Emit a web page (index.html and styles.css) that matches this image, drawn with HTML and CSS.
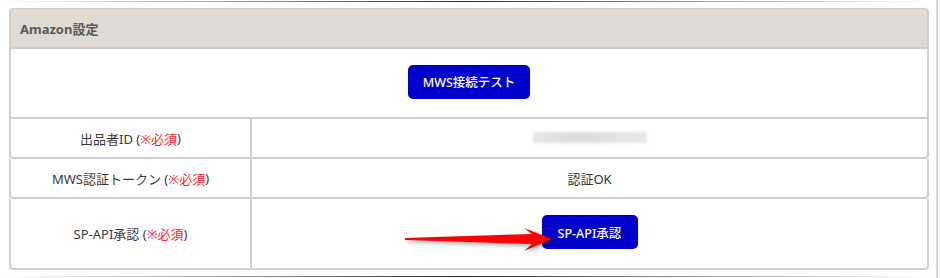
FILE: index.html
```html
<!DOCTYPE html>
<html lang="ja">
<head>
<meta charset="utf-8">
<link rel="stylesheet" href="styles.css">
</head>
<body>
<div class="screen">
  <div class="edge-line"></div>
  <div class="panel">
    <div class="panel-head">Amazon設定</div>
    <div class="row row-full">
      <button class="btn btn-wide">MWS接続テスト</button>
    </div>
    <div class="row row-split rounded">
      <div class="cell label">出品者ID (<span class="req">※必須</span>)</div>
      <div class="cell value"><span class="blur"></span></div>
    </div>
    <div class="row row-split rounded">
      <div class="cell label">MWS認証トークン (<span class="req">※必須</span>)</div>
      <div class="cell value">認証OK</div>
    </div>
    <div class="row row-split rounded tall">
      <div class="cell label">SP-API承認 (<span class="req">※必須</span>)</div>
      <div class="cell value">
        <button class="btn btn-sp">SP-API承認</button>
      </div>
    </div>
    <svg class="arrow" width="160" height="34" viewBox="0 0 160 34">
      <polygon points="2,14 129,10 121,4 149,15 121,27 129,20 2,16" fill="#ff0000"/>
    </svg>
  </div>
  <div class="edge-line bottom"></div>
</div>
</body>
</html>
```

FILE: styles.css
```css
html, body {
  margin: 0;
  padding: 0;
  background: #ffffff;
}

body {
  font-family: "Noto Sans", "Noto Sans CJK JP", sans-serif;
  font-size: 13px;
  color: #333333;
}

.screen {
  width: 938px;
  height: 278px;
  box-sizing: border-box;
  border-right: 2px solid #d9d9d9;
  padding-top: 1px;
  overflow: hidden;
}

.edge-line {
  height: 1px;
  width: 930px;
  background: linear-gradient(to right, rgba(60,60,60,0) 0%, rgba(60,60,60,0.5) 25%, #2a2a2a 50%, rgba(60,60,60,0.5) 75%, rgba(60,60,60,0) 100%);
}

.edge-line.bottom {
  margin-top: 6px;
}

.panel {
  position: relative;
  margin: 6px 0 0 9px;
  width: 920px;
}

.panel-head {
  height: 37px;
  box-sizing: content-box;
  border: 2px solid #cfcfcf;
  border-top-width: 1px;
  border-radius: 4px 4px 0 0;
  background: #e2dbd4;
  padding: 1px 0 0 9px;
  display: flex;
  align-items: center;
  font-weight: bold;
  font-size: 13px;
  color: #5a5a5a;
}

.row {
  border: 2px solid #cfcfcf;
  border-top: 0;
}

.row-full {
  height: 68px;
  display: flex;
  align-items: center;
  justify-content: center;
}

.row-split {
  height: 38px;
  display: grid;
  grid-template-columns: 241px 1fr;
}

.row-split.tall {
  height: 69px;
}

.rounded {
  border-radius: 0 0 4px 4px;
}

.cell {
  display: flex;
  align-items: center;
  justify-content: center;
}

.label {
  border-right: 2px solid #cfcfcf;
  color: #3a3a3a;
}

.value {
  color: #333333;
}

.req {
  color: #ff2020;
}

.btn {
  background: #0000cc;
  color: #ffffff;
  border: 0;
  border-radius: 5px;
  height: 34px;
  font-family: "Noto Sans", "Noto Sans CJK JP", sans-serif;
  font-size: 12.5px;
  font-weight: 500;
  cursor: pointer;
}

.btn-wide {
  width: 122px;
  margin-top: -3px;
}

.btn-sp {
  width: 96px;
  margin-top: -3px;
}

.blur {
  display: block;
  width: 114px;
  height: 11px;
  margin-top: -1px;
  background: linear-gradient(to right, #e6e6e6, #dcdcdc 40%, #e2e2e2 70%, #e8e8e8);
  filter: blur(1.5px);
}

.arrow {
  position: absolute;
  left: 394px;
  top: 216px;
  filter: drop-shadow(2px 2px 2px rgba(0, 0, 0, 0.35));
}
```
